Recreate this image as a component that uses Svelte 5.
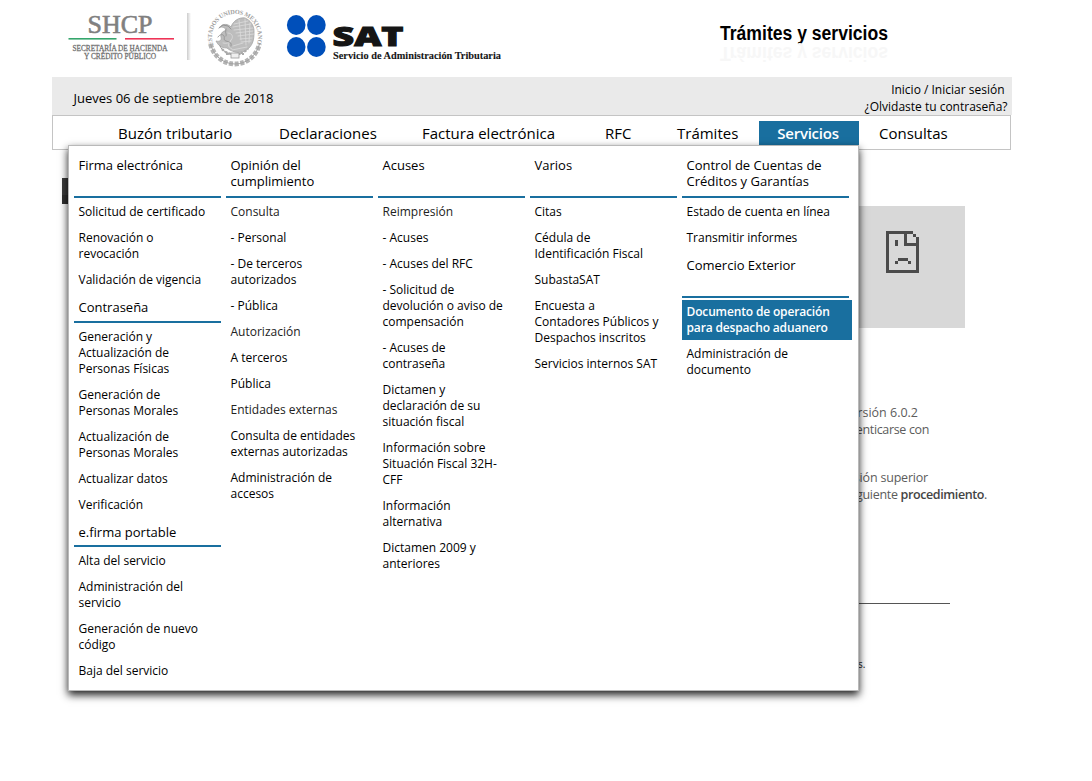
<script>
  const nav = [
    { label: 'Buzón tributario', x: 65 },
    { label: 'Declaraciones', x: 226 },
    { label: 'Factura electrónica', x: 369 },
    { label: 'RFC', x: 552 },
    { label: 'Trámites', x: 624 },
    { label: 'Servicios', x: 724, active: true },
    { label: 'Consultas', x: 826 }
  ];

  const i = (...lines) => ({ lines });
  const s = (line) => ({ lines: [line], soft: true });

  const columns = [
    [
      { title: ['Firma electrónica'], h: 45, items: [i('Solicitud de certificado'), i('Renovación o', 'revocación'), i('Validación de vigencia')] },
      { title: ['Contraseña'], h: 28, items: [i('Generación y', 'Actualización de', 'Personas Físicas'), i('Generación de', 'Personas Morales'), i('Actualización de', 'Personas Morales'), i('Actualizar datos'), i('Verificación')] },
      { title: ['e.firma portable'], h: 27, items: [i('Alta del servicio'), i('Administración del', 'servicio'), i('Generación de nuevo', 'código'), i('Baja del servicio')] }
    ],
    [
      { title: ['Opinión del', 'cumplimiento'], h: 45, items: [s('Consulta'), i('- Personal'), i('- De terceros', 'autorizados'), i('- Pública'), s('Autorización'), i('A terceros'), i('Pública'), s('Entidades externas'), i('Consulta de entidades', 'externas autorizadas'), i('Administración de', 'accesos')] }
    ],
    [
      { title: ['Acuses'], h: 45, items: [s('Reimpresión'), i('- Acuses'), i('- Acuses del RFC'), i('- Solicitud de', 'devolución o aviso de', 'compensación'), i('- Acuses de', 'contraseña'), i('Dictamen y', 'declaración de su', 'situación fiscal'), i('Información sobre', 'Situación Fiscal 32H-', 'CFF'), i('Información', 'alternativa'), i('Dictamen 2009 y', 'anteriores')] }
    ],
    [
      { title: ['Varios'], h: 45, items: [i('Citas'), i('Cédula de', 'Identificación Fiscal'), i('SubastaSAT'), i('Encuesta a', 'Contadores Públicos y', 'Despachos inscritos'), i('Servicios internos SAT')] }
    ],
    [
      { title: ['Control de Cuentas de', 'Créditos y Garantías'], h: 45, items: [i('Estado de cuenta en línea'), i('Transmitir informes')] },
      { title: ['Comercio Exterior'], h: 45, items: [{ lines: ['Documento de operación', 'para despacho aduanero'], active: true }, i('Administración de', 'documento')] }
    ]
  ];
</script>

<div class="page">
  <header>
    <svg class="logos" width="460" height="77" viewBox="0 0 460 77">
      <defs>
        <linearGradient id="sep" x1="0" x2="1"><stop offset="0" stop-color="#aaa" /><stop offset="1" stop-color="#fff" /></linearGradient>
        <path id="ring" d="M161.500 45 A23 23 0 1 1 204.500 45" />
      </defs>
      <g font-family="Liberation Serif" fill="#808080" stroke="#808080">
        <text x="35.500" y="32.500" font-size="25.500" stroke-width=".6" textLength="65" lengthAdjust="spacingAndGlyphs">SHCP</text>
        <g fill="#707070" stroke="#707070" stroke-width=".3" font-size="8.800">
          <text x="20.500" y="50.500" textLength="95" lengthAdjust="spacingAndGlyphs">SECRETARÍA DE HACIENDA</text>
          <text x="32" y="59" textLength="72" lengthAdjust="spacingAndGlyphs">Y CRÉDITO PÚBLICO</text>
        </g>
      </g>
      <rect x="16.500" y="38" width="48" height="1.600" fill="#35a66c" />
      <rect x="73" y="38" width="49" height="1.600" fill="#ee3457" />
      <rect x="135" y="13" width="4" height="47" fill="url(#sep)" opacity=".6" />

      <g stroke="#a5a5a5" fill="none" stroke-linecap="round">
        <text font-family="Liberation Serif" font-size="6.200" font-weight="bold" letter-spacing="-.15" fill="#a0a0a0" stroke="none"><textPath href="#ring">ESTADOS UNIDOS MEXICANOS</textPath></text>
        <path d="M158.500 44c3 12 13 20 24.500 20s21.500-8 24.500-20" stroke="#b4b4b4" stroke-width="4.800" stroke-dasharray="4 1.600" stroke-linecap="butt" />
        <path d="M158.500 44c3 12 13 20 24.500 20s21.500-8 24.500-20" stroke="#a2a2a2" stroke-width="1" />
        <path d="M168 27c3-4 8-3 11 0 2-6 8-10 14-9 5 2 9 7 9 13 0 6 0 12-5 17-4 4-9 5-14 4-3-1-6-2-8-4-6 0-9-3-11-7 4 1 6-1 5-4-1-4 3-7 6-6-2-4-5-4-7-4z" fill="#bdbdbd" stroke-width=".8" />
        <path d="M182 24l14-3M181 27l18-3M182 30l19-2M184 33l17-2M186 36l16-2M188 39l12-1M189 42l10-1M176 33c4 0 6 4 3 7s-4 7 1 9M171 43c3 1 6 0 8-2M181 46l10-3M180 50l15-3M187 20l2 20M193 19l1 26M198 23l-1 20" stroke="#dcdcdc" stroke-width=".8" />
        <path d="M167 28l4-3 5 1 3 3M166 37c2-3 5-3 6-1s-1 4 2 5 6 1 5 5M174 29c-2 3 1 4 0 7M168 46c2 5 8 8 13 8" stroke="#969696" stroke-width="1" />
        <path d="M170 49c6 7 18 7 26 0M174 54h18" stroke="#aaa" stroke-width="2.200" stroke-dasharray="2.500 1.500" stroke-linecap="butt" />
        <rect x="179" y="53" width="8" height="5" fill="#eee" stroke="#999" stroke-width=".8" />
      </g>

      <g fill="#004fba">
        <ellipse cx="244.200" cy="25" rx="9.300" ry="10" /><ellipse cx="264.400" cy="25" rx="9.300" ry="10" />
        <ellipse cx="244.200" cy="47" rx="9.300" ry="10" /><ellipse cx="264.400" cy="47" rx="9.300" ry="10" />
      </g>
      <g fill="#151515" stroke="#151515">
        <text x="280.500" y="45.800" font-family="Open Sans" font-weight="800" font-size="26" stroke-width="1" textLength="71" lengthAdjust="spacingAndGlyphs">SAT</text>
        <text x="281" y="58.500" font-family="Liberation Serif" font-weight="bold" font-size="11" stroke-width=".1" textLength="168" lengthAdjust="spacingAndGlyphs">Servicio de Administración Tributaria</text>
      </g>
    </svg>
    <svg class="heading" width="190" height="70" viewBox="0 0 190 70">
      <g font-family="Liberation Sans" font-weight="bold" font-size="19.500">
        <text x="8" y="40" textLength="168" lengthAdjust="spacingAndGlyphs">Trámites y servicios</text>
        <text x="8" y="-47" transform="scale(1 -1)" fill="#f7f7f7" textLength="168" lengthAdjust="spacingAndGlyphs" aria-hidden="true">Trámites y servicios</text>
      </g>
    </svg>
  </header>

  <div class="topbar">
    <span class="date">Jueves 06 de septiembre de 2018</span>
    <div class="session"><a class="login">Inicio / Iniciar sesión</a><a>¿Olvidaste tu contraseña?</a></div>
  </div>

  <nav>
    {#each nav as n}
      <a class:active={n.active} style="--x:{n.x}px">{n.label}</a>
    {/each}
  </nav>

  <main>
    <div class="strip"></div>
    <div class="plugin">
      <svg width="33" height="42" viewBox="0 0 33 42" shape-rendering="crispEdges" fill="#4b4b4b">
        <path d="M0 0h27v3h-6v9h12v3H18V3H3v36h27V6h3v36H0zM27 3h3v3h-3zM9 9h3v6H9zM12 27h10v3H12zM9 30h3v3H9zM22 30h3v3h-3z" />
      </svg>
    </div>
    <div class="copy">
      <p><span class="l1">versión 6.0.2</span><span class="l2">autenticarse con</span></p>
      <p><span class="l3">versión superior</span><span class="l4">siguiente <b>procedimiento</b>.</span></p>
    </div>
    <hr />
    <small>s.</small>
  </main>

  <div class="menu">
    {#each columns as col}
      <div class="col">
        {#each col as sec}
          <section style="--h:{sec.h}px">
            <h2>{#each sec.title as l}<span>{l}</span>{/each}</h2>
            <ul>
              {#each sec.items as it}
                <li class:active={it.active} class:soft={it.soft}>{#each it.lines as l}<span>{l}</span>{/each}</li>
              {/each}
            </ul>
          </section>
        {/each}
      </div>
    {/each}
  </div>
</div>

<style>
  :global(body) { background: #fff; overflow: hidden; }
  .page { position: relative; width: 1092px; height: 781px; overflow: hidden; box-sizing: border-box; padding-left: 52px; font-family: 'Open Sans', sans-serif; color: #000; }
  header { height: 77px; display: flex; }
  .logos { flex: none; }
  .heading { margin-left: 200px; }
  .topbar { width: 960px; height: 38px; background: #eaeaea; display: flex; justify-content: space-between; box-sizing: border-box; padding: 4px 4.5px 0 21.5px; }
  .date { line-height: 34px; font-size: 13px; }
  .session { display: flex; flex-direction: column; align-items: flex-end; line-height: 17px; font-size: 12px; }
  .login { margin-right: 3px; }
  nav { width: 959px; height: 35px; box-sizing: border-box; border: 1px solid #c4c4c4; display: grid; }
  nav a { grid-area: 1 / 1; justify-self: start; margin: 5px 0 0 var(--x); height: 24px; line-height: 25px; font-size: 15px; white-space: nowrap; }
  nav a.active { margin-left: 706px; width: 100px; text-align: center; background: #196f9f; color: #fff; font-weight: 600; letter-spacing: -0.25px; box-sizing: border-box; padding-right: 2px; }
  main { padding-top: 28px; width: 960px; display: flex; flex-direction: column; }
  .strip { width: 30px; height: 26px; margin-left: 10px; background: linear-gradient(#3c3c3c 65%, #303030 65%); }
  .plugin { width: 200px; height: 122px; margin: 2px 0 0 713px; background: #d8d8d8; box-sizing: border-box; padding: 25px 0 0 121px; }
  .plugin svg { display: block; }
  .copy { margin-top: 76px; color: #5c5c5c; font: 12.5px/17px 'Open Sans', sans-serif; }
  .copy p { margin: 0 0 31px; display: flex; flex-direction: column; align-items: flex-end; }
  .copy b { font-weight: 600; color: #444; letter-spacing: -0.4px; }
  .l1 { margin-right: 94px; } .l2 { margin-right: 83px; letter-spacing: -0.35px; } .l3 { margin-right: 84px; letter-spacing: -0.2px; } .l4 { margin-right: 25px; letter-spacing: -0.3px; }
  hr { width: 300px; height: 1px; border: 0; background: #555; margin: 69px 0 0 598px; }
  small { margin: 53px 0 0 806px; font: 10px/14px 'Open Sans', sans-serif; color: #222; }
  .menu { position: absolute; left: 68px; top: 145px; width: 791px; height: 546px; box-sizing: border-box; border: 1px solid #b9b9b9; background: #fff; box-shadow: 0 4px 8px #000000e0; display: grid; grid-template-columns: repeat(4, 147px) 170px; column-gap: 5px; padding: 5px 5px 0; }
  h2 { margin: 0; height: calc(var(--h) - 6px); padding: 6px 0 0 4.5px; border-bottom: 2px solid #196f9f; font-size: 13px; line-height: 16px; font-weight: 400; }
  .col:last-child h2 { width: 162.5px; }
  .menu span { display: block; white-space: nowrap; }
  ul { margin: 0; padding: 0; list-style: none; display: flow-root; }
  li { padding: 4px 4px 4px 4.5px; margin: 0 0 2px; font-size: 12px; line-height: 16px; }
  li:first-child { margin-top: 2px; }
  li:last-child { margin-bottom: 1px; }
  li.soft { color: #222; }
  li.active { background: #196f9f; color: #fff; font-weight: 600; letter-spacing: -0.15px; }
</style>
